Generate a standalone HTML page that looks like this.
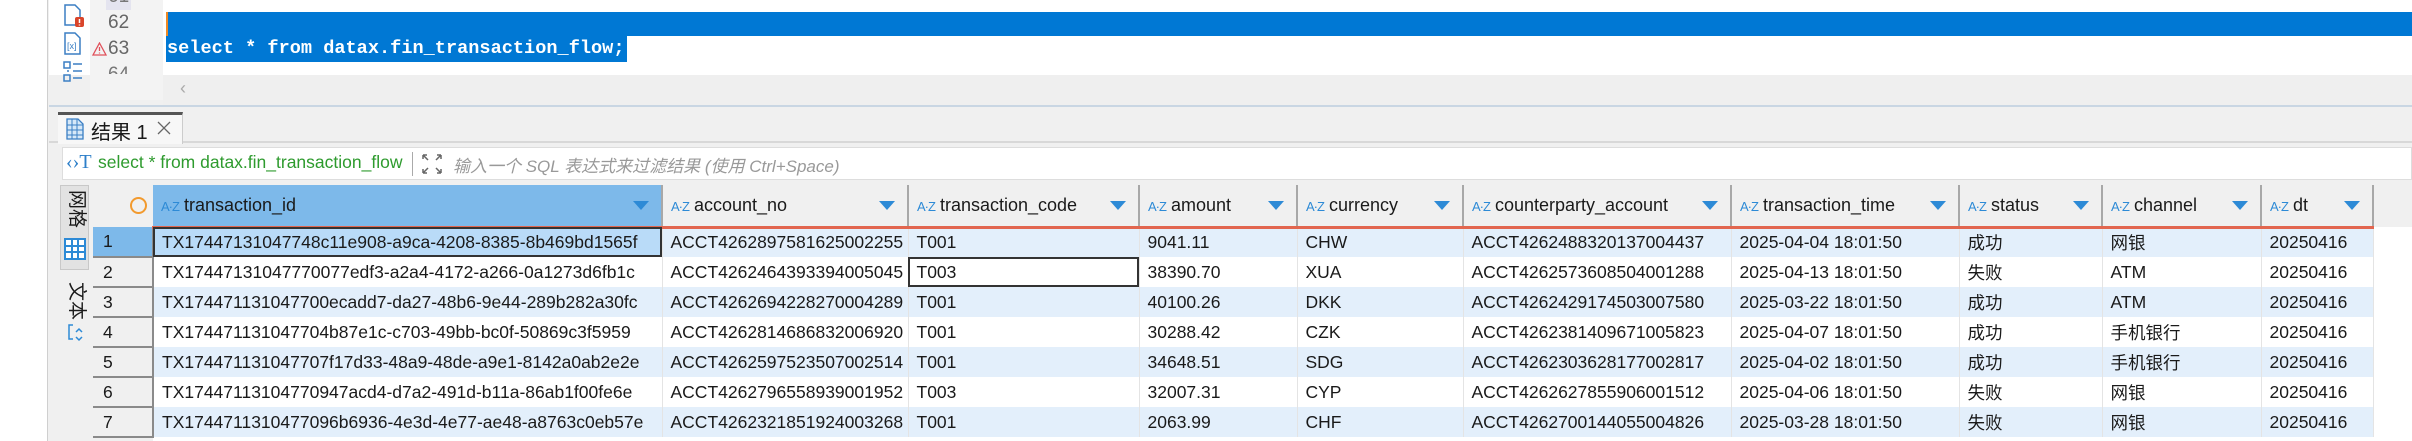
<!DOCTYPE html>
<html><head><meta charset="utf-8"><style>
*{margin:0;padding:0;box-sizing:border-box}
body{width:2412px;height:441px;overflow:hidden;background:#f0f0f0;position:relative;font-family:"Liberation Sans","Noto Sans CJK SC",sans-serif;font-size:17.5px;color:#1a1a1a}
.a{position:absolute}
.mono{font-family:"Liberation Mono",monospace;font-size:18.6px;font-weight:bold}
table{border-collapse:collapse;table-layout:fixed;position:absolute;left:93px;top:185px;width:2280px}
td,th{height:30px;white-space:nowrap;overflow:hidden;padding-left:8px;text-align:left;font-weight:normal;border-right:1px solid #e4e4e4}
th{height:42px;background:#f0f0f0;border-right:2px solid #a8a8a8;border-bottom:3px solid #e2664f;position:relative;font-size:18px}
th .az{color:#2d8ad6;font-size:13px;margin-right:5px;letter-spacing:-1px}
th .tri{position:absolute;right:12px;top:16px;width:0;height:0;border-left:8px solid transparent;border-right:8px solid transparent;border-top:9px solid #2d8ad6}
tr.o td{background:#e3effb}
tr.e td{background:#fff}
td.n{background:#f0f0f0!important;border-bottom:2px solid #8a8a8a;border-right:2px solid #8a8a8a;padding-left:10px}
.v{writing-mode:vertical-rl;text-orientation:sideways}
</style></head><body>
<div class="a" style="left:0;top:0;width:48px;height:441px;background:#fff;border-right:1px solid #cfcfcf"></div>
<div class="a" style="left:49px;top:0;width:2363px;height:75px;background:#fff"></div>
<div class="a" style="left:90px;top:0;width:73px;height:100px;background:#f3f3f3"></div>
<div class="a" style="left:163px;top:75px;width:2249px;height:30px;background:#efefef"></div>
<div class="a" style="left:180px;top:78px;color:#aaa;font-size:18px">‹</div>
<div class="a" style="left:106px;top:0;width:25px;height:10px;background:#e4e4ef"></div>
<div class="a" style="left:108px;top:-14px;color:#777;font-size:19px">61</div>
<div class="a" style="left:108px;top:12px;color:#666;font-size:19px">62</div>
<div class="a" style="left:108px;top:38px;color:#666;font-size:19px">63</div>
<div class="a" style="left:108px;top:64px;height:10px;overflow:hidden;color:#777;font-size:19px">64</div>
<svg class="a" style="left:92px;top:42px" width="15" height="14"><path d="M7.5 1 L14 13 L1 13 Z" fill="none" stroke="#e0505a" stroke-width="1.3"/><path d="M7.5 5v4M7.5 10.5v1" stroke="#e0505a" stroke-width="1.3"/></svg>
<svg class="a" style="left:63px;top:4px" width="24" height="24"><path d="M2 1h10l5 5v15H2z" fill="#fff" stroke="#3b7fc4" stroke-width="1.5"/><rect x="12" y="13" width="9" height="10" rx="2" fill="#d9452b"/><path d="M16.5 15v4M16.5 20.5v1" stroke="#fff" stroke-width="1.5"/></svg>
<svg class="a" style="left:63px;top:32px" width="22" height="24"><path d="M2 1h10l5 5v16H2z" fill="#fff" stroke="#3b7fc4" stroke-width="1.5"/><text x="4" y="17" font-size="9" fill="#3b7fc4" font-family="Liberation Sans">[x]</text></svg>
<svg class="a" style="left:63px;top:61px" width="22" height="22"><rect x="1" y="1" width="6" height="6" fill="none" stroke="#3b7fc4" stroke-width="1.5"/><rect x="1" y="14" width="6" height="6" fill="none" stroke="#3b7fc4" stroke-width="1.5"/><path d="M10 3h9M10 10h9M10 17h9M4 10h2" stroke="#3b7fc4" stroke-width="1.5"/></svg>
<div class="a" style="left:166px;top:12px;width:2246px;height:24px;background:#0078d4"></div>
<div class="a" style="left:166px;top:12px;width:2px;height:24px;background:#f08a24"></div>
<div class="a mono" style="left:166px;top:36px;width:461px;height:26px;background:#0078d4;color:#fff;line-height:26px;padding-left:1px">select * from datax.fin_transaction_flow;</div>
<div class="a" style="left:49px;top:105px;width:2363px;height:2px;background:#c9d6e3"></div>
<div class="a" style="left:49px;top:141px;width:2363px;height:2px;background:#d8d8d8"></div>
<div class="a" style="left:58px;top:112px;width:125px;height:32px;background:#f7f7f7;border-top:3px solid #555;border-right:1px solid #ccc"></div>
<svg class="a" style="left:66px;top:118px" width="18" height="22"><path d="M1 1h11l5 5v15H1z" fill="#d6e8f8" stroke="#3b7fc4" stroke-width="1.3"/><path d="M1 7h16M1 12h16M1 17h16M6 1v20M11 1v20" stroke="#3b7fc4" stroke-width="1"/></svg>
<div class="a" style="left:91px;top:116px;font-size:20px">结果 1</div>
<svg class="a" style="left:157px;top:121px" width="14" height="14"><path d="M1 1L13 13M13 1L1 13" stroke="#666" stroke-width="1.3"/></svg>
<div class="a" style="left:62px;top:147px;width:2350px;height:33px;background:#fff;border:1px solid #ddd"></div>
<div class="a" style="left:66px;top:151px;color:#2d7fc9;font-size:20px;font-family:'Liberation Serif',serif">‹›T</div>
<div class="a" style="left:98px;top:152px;color:#2e9b2e;font-size:17.5px">select * from datax.fin_transaction_flow</div>
<div class="a" style="left:412px;top:152px;width:1px;height:24px;background:#aaa"></div>
<svg class="a" style="left:421px;top:153px" width="22" height="22"><path d="M2 2l5 5M2 2h4M2 2v4M20 2l-5 5M20 2h-4M20 2v4M2 20l5-5M2 20h4M2 20v-4M20 20l-5-5M20 20h-4M20 20v-4" stroke="#666" stroke-width="1.5" fill="none"/></svg>
<div class="a" style="left:453px;top:152px;color:#999;font-size:17px;font-style:italic">输入一个 SQL 表达式来过滤结果 (使用 Ctrl+Space)</div>
<div class="a" style="left:60px;top:185px;width:29px;height:85px;background:#e2e2e2;border:1px solid #c8c8c8"></div>
<div class="a v" style="left:63px;top:190px;width:24px;font-size:19px;line-height:22px">网格</div>
<svg class="a" style="left:64px;top:238px" width="22" height="22"><rect x="1" y="1" width="20" height="20" fill="#fff" stroke="#2d8ad6" stroke-width="2"/><path d="M1 8h20M1 14h20M8 1v20M14 1v20" stroke="#2d8ad6" stroke-width="2"/></svg>
<div class="a v" style="left:63px;top:282px;width:24px;font-size:19px;line-height:22px">文本</div>
<svg class="a" style="left:67px;top:323px" width="16" height="22"><path d="M6 2H2v14h4M9 9l3-3 3 3M9 14l3 3 3-3" stroke="#2d8ad6" stroke-width="1.5" fill="none"/></svg>
<div class="a" style="left:93px;top:185px;width:60px;height:42px;background:#f0f0f0"></div>
<div class="a" style="left:130px;top:197px;width:17px;height:17px;border:2px solid #f29a2e;border-radius:50%"></div>
<div class="a" style="left:153px;top:227px;width:2259px;height:214px;background:#fff"></div>
<table>
<colgroup><col style="width:60px"><col style="width:509px"><col style="width:246px"><col style="width:231px"><col style="width:158px"><col style="width:166px"><col style="width:268px"><col style="width:228px"><col style="width:143px"><col style="width:159px"><col style="width:112px"></colgroup>
<tr style="height:42px"><th style="background:transparent;border:none"></th>
<th style="background:#7db9ea"><span class="az">A·Z</span>transaction_id<span class="tri"></span></th>
<th><span class="az">A·Z</span>account_no<span class="tri"></span></th>
<th><span class="az">A·Z</span>transaction_code<span class="tri"></span></th>
<th><span class="az">A·Z</span>amount<span class="tri"></span></th>
<th><span class="az">A·Z</span>currency<span class="tri"></span></th>
<th><span class="az">A·Z</span>counterparty_account<span class="tri"></span></th>
<th><span class="az">A·Z</span>transaction_time<span class="tri"></span></th>
<th><span class="az">A·Z</span>status<span class="tri"></span></th>
<th><span class="az">A·Z</span>channel<span class="tri"></span></th>
<th><span class="az">A·Z</span>dt<span class="tri"></span></th></tr>
<tr class="o"><td class="n" style="background:#7db9ea!important">1</td><td style="background:#b9dbf8;outline:2px solid #333;outline-offset:-2px">TX17447131047748c11e908-a9ca-4208-8385-8b469bd1565f</td><td>ACCT4262897581625002255</td><td>T001</td><td>9041.11</td><td>CHW</td><td>ACCT4262488320137004437</td><td>2025-04-04 18:01:50</td><td>成功</td><td>网银</td><td>20250416</td></tr>
<tr class="e"><td class="n">2</td><td>TX17447131047770077edf3-a2a4-4172-a266-0a1273d6fb1c</td><td>ACCT4262464393394005045</td><td style="outline:2px solid #333;outline-offset:-2px">T003</td><td>38390.70</td><td>XUA</td><td>ACCT4262573608504001288</td><td>2025-04-13 18:01:50</td><td>失败</td><td>ATM</td><td>20250416</td></tr>
<tr class="o"><td class="n">3</td><td>TX174471131047700ecadd7-da27-48b6-9e44-289b282a30fc</td><td>ACCT4262694228270004289</td><td>T001</td><td>40100.26</td><td>DKK</td><td>ACCT4262429174503007580</td><td>2025-03-22 18:01:50</td><td>成功</td><td>ATM</td><td>20250416</td></tr>
<tr class="e"><td class="n">4</td><td>TX174471131047704b87e1c-c703-49bb-bc0f-50869c3f5959</td><td>ACCT4262814686832006920</td><td>T001</td><td>30288.42</td><td>CZK</td><td>ACCT4262381409671005823</td><td>2025-04-07 18:01:50</td><td>成功</td><td>手机银行</td><td>20250416</td></tr>
<tr class="o"><td class="n">5</td><td>TX174471131047707f17d33-48a9-48de-a9e1-8142a0ab2e2e</td><td>ACCT4262597523507002514</td><td>T001</td><td>34648.51</td><td>SDG</td><td>ACCT4262303628177002817</td><td>2025-04-02 18:01:50</td><td>成功</td><td>手机银行</td><td>20250416</td></tr>
<tr class="e"><td class="n">6</td><td>TX17447113104770947acd4-d7a2-491d-b11a-86ab1f00fe6e</td><td>ACCT4262796558939001952</td><td>T003</td><td>32007.31</td><td>CYP</td><td>ACCT4262627855906001512</td><td>2025-04-06 18:01:50</td><td>失败</td><td>网银</td><td>20250416</td></tr>
<tr class="o"><td class="n">7</td><td>TX1744711310477096b6936-4e3d-4e77-ae48-a8763c0eb57e</td><td>ACCT4262321851924003268</td><td>T001</td><td>2063.99</td><td>CHF</td><td>ACCT4262700144055004826</td><td>2025-03-28 18:01:50</td><td>失败</td><td>网银</td><td>20250416</td></tr>
</table>
</body></html>
